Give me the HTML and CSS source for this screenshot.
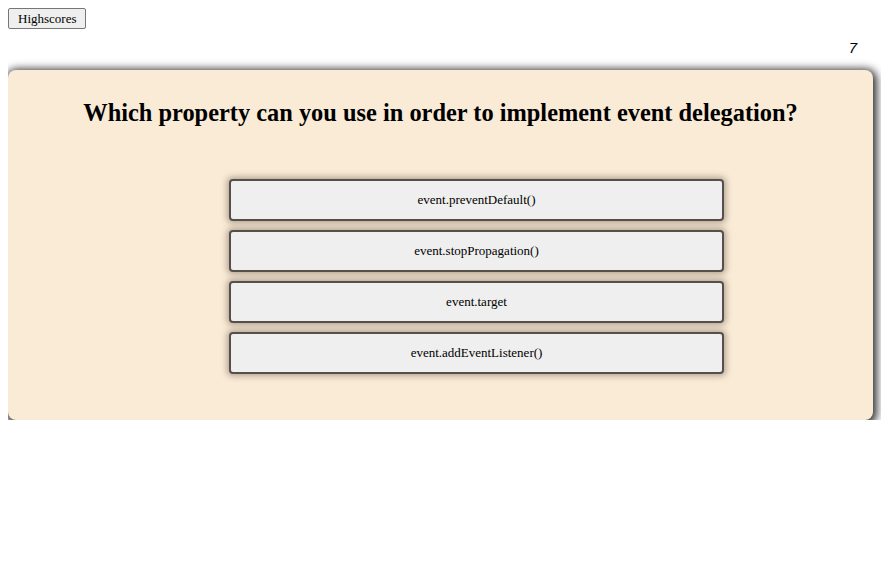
FILE: index.html
```html
<!DOCTYPE html>
<html lang="en">
<head>
    <meta charset="UTF-8">
    <title>Code Quiz</title>
    <link rel="stylesheet" href="styles.css">
</head>
<body>
    <header class="top-bar">
        <button id="highscoresButton" class="highscores-btn">Highscores</button>
    </header>

    <div id="timer" class="timer">7</div>

    <main class="quiz-card">
        <h1 id="question" class="question">Which property can you use in order to implement event delegation?</h1>

        <div id="answers" class="answers">
            <button class="answer">event.preventDefault()</button>
            <button class="answer">event.stopPropagation()</button>
            <button class="answer">event.target</button>
            <button class="answer">event.addEventListener()</button>
        </div>
    </main>
</body>
</html>
```

FILE: styles.css
```css
body {
    margin: 8px;
    font-family: "Liberation Serif", "DejaVu Serif", serif;
    background: #ffffff;
    color: #000000;
}

.top-bar {
    display: flex;
}

.highscores-btn {
    font-family: "Liberation Serif", serif;
    font-size: 13px;
    height: 21px;
    padding: 0 8px 0 9px;
    background: #efefef;
    border: 1px solid #767676;
    border-radius: 2px;
    color: #000;
}

.timer {
    text-align: right;
    font-family: "Liberation Sans", sans-serif;
    font-style: italic;
    font-size: 15px;
    padding-right: 24px;
    margin-top: 11px;
    line-height: 15px;
}

.quiz-card {
    width: 865px;
    box-sizing: border-box;
    margin-top: 15px;
    background: #faebd7;
    border-radius: 8px;
    box-shadow: 1px 2px 9px 3px rgba(0, 0, 0, 0.8);
    padding: 29px 0 48px;
}

.question {
    font-size: 24.4px;
    font-weight: bold;
    text-align: center;
    margin: 0 0 54px;
    line-height: 28px;
}

.answers {
    display: flex;
    flex-direction: column;
    gap: 13px;
    padding-left: 223px;
}

.answer {
    width: 491px;
    height: 38px;
    background: #efefef;
    border: none;
    border-radius: 2px;
    font-family: "Liberation Serif", serif;
    font-size: 13px;
    color: #000;
    box-shadow: 0 0 0 2px #555049, 0 0 6px 4px rgba(90, 75, 60, 0.45);
}
```
